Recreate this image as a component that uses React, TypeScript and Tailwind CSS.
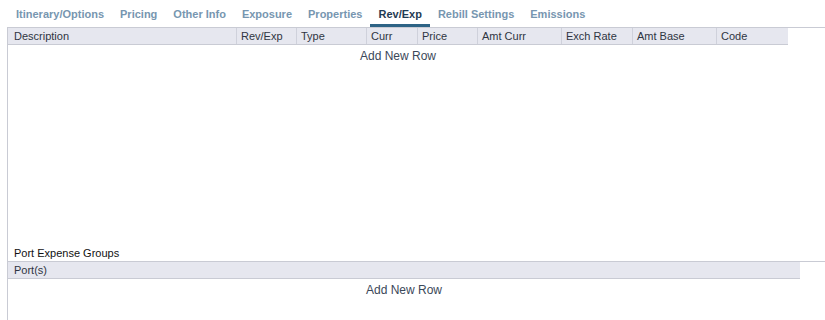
const tabs = [
  "Itinerary/Options",
  "Pricing",
  "Other Info",
  "Exposure",
  "Properties",
  "Rev/Exp",
  "Rebill Settings",
  "Emissions",
];

const columns = [
  { label: "Description", w: "w-[228px]" },
  { label: "Rev/Exp", w: "w-[60px]" },
  { label: "Type", w: "w-[70px]" },
  { label: "Curr", w: "w-[51px]" },
  { label: "Price", w: "w-[60px]" },
  { label: "Amt Curr", w: "w-[84px]" },
  { label: "Exch Rate", w: "w-[71px]" },
  { label: "Amt Base", w: "w-[84px]" },
  { label: "Code", w: "w-[72px]" },
];

export default function App() {
  const active = "Rev/Exp";

  return (
    <div className="w-[825px] h-[320px] overflow-hidden bg-white font-['Liberation_Sans',Arial,sans-serif]">
      {/* tab strip */}
      <div className="flex pl-[8px] h-[27px]">
        {tabs.map((t) => (
          <div
            key={t}
            className={
              t === active
                ? "px-[8px] pt-[8px] text-[11px] leading-[13px] font-bold text-[#1f3b53] border-b-[3px] border-[#2d6385]"
                : "px-[8px] pt-[8px] text-[11px] leading-[13px] font-bold text-[#7796b0] border-b-[3px] border-transparent"
            }
          >
            {t}
          </div>
        ))}
      </div>

      {/* panel */}
      <div className="ml-[7px] h-[293px] border-l border-t border-[#c9cbd4] flex flex-col">
        <div className="w-[780px]">
          <div className="flex h-[17px] bg-[#e6e7ef] border-b border-[#c9cbd4] text-[11px] leading-[16px] text-[#2f3542]">
            {columns.map((c, i) => (
              <div
                key={c.label}
                className={
                  i === 0
                    ? `${c.w} pl-[6px] truncate`
                    : `${c.w} pl-[4px] border-l border-[#cfd1db] truncate`
                }
              >
                {c.label}
              </div>
            ))}
          </div>
          <div className="h-[202px]">
            <div className="pt-[4px] text-center text-[12px] leading-[14px] text-[#3b4859]">
              Add New Row
            </div>
          </div>
        </div>

        <div className="pl-[6px] h-[14px] text-[11px] leading-[13px] text-[#111]">
          Port Expense Groups
        </div>

        <div className="border-t border-[#c9cbd4]">
          <div className="w-[792px]">
            <div className="h-[17px] pl-[6px] bg-[#e6e7ef] border-b border-[#c9cbd4] text-[11px] leading-[16px] text-[#2f3542]">
              Port(s)
            </div>
            <div className="pt-[4px] text-center text-[12px] leading-[14px] text-[#3b4859]">
              Add New Row
            </div>
          </div>
        </div>
      </div>
    </div>
  );
}
